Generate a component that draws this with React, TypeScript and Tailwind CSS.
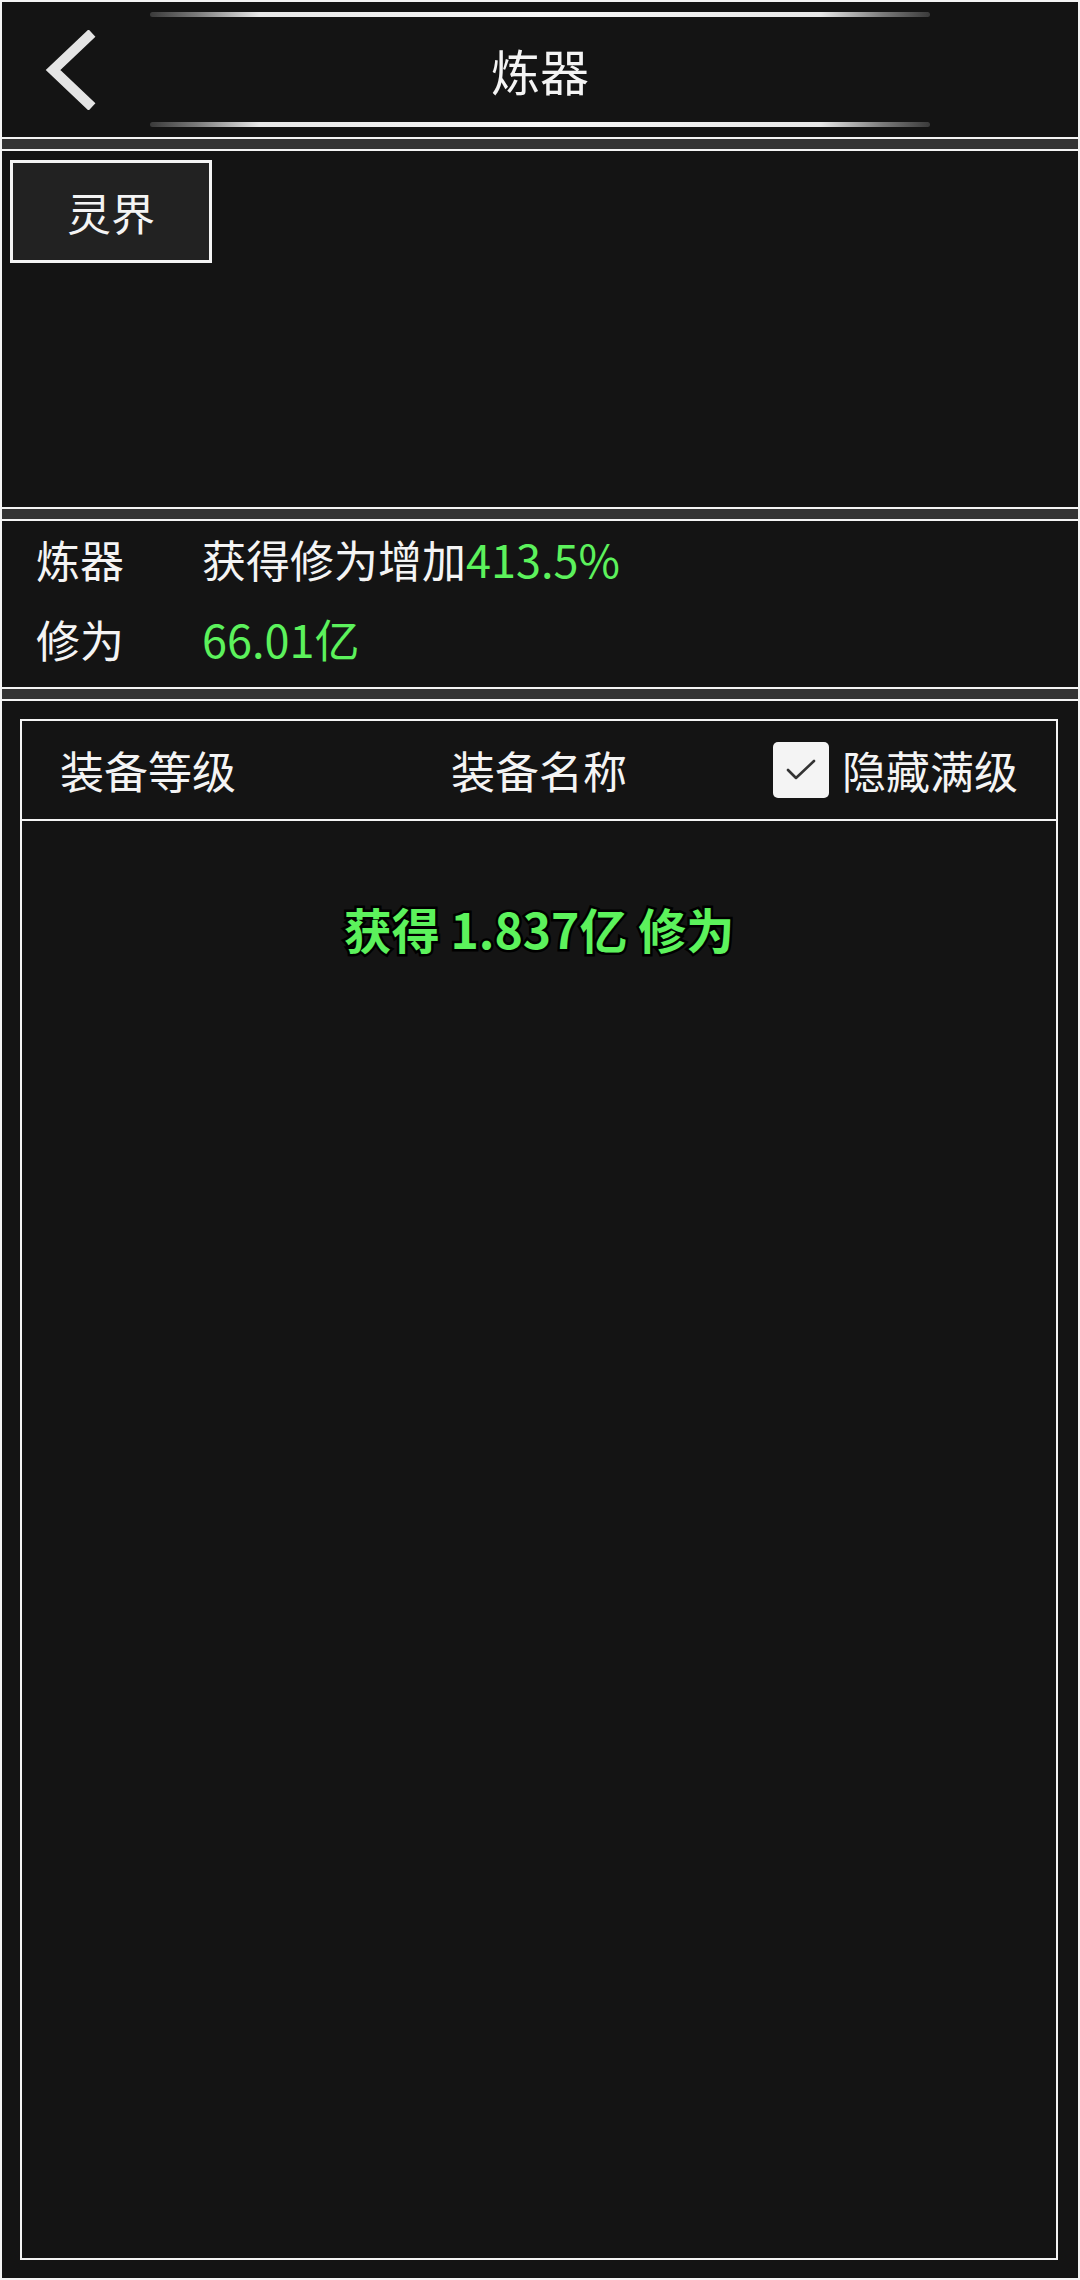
import React from "react";

function GlowLine() {
  return (
    <div className="ml-[148px] w-[780px] h-[5px] rounded-full bg-[linear-gradient(90deg,#3a3a3a_0%,#7a7a7a_6%,#e8e8e8_14%,#f8f8f8_50%,#e8e8e8_86%,#7a7a7a_94%,#3a3a3a_100%)]" />
  );
}

function Divider() {
  return <div className="h-[10px] bg-[#343434] shrink-0" />;
}

export default function App() {
  return (
    <div className="w-[1080px] h-[2280px] bg-[#f4f4f4] p-[2px] flex flex-col gap-[2px] font-['Noto_Sans_CJK_SC','Noto_Sans',sans-serif] text-[#f4f4f4]">
      {/* Header */}
      <div className="h-[135px] shrink-0 bg-[#141414] flex flex-col pt-[10px]">
        <GlowLine />
        <div className="h-[105px] grid grid-cols-[1fr_auto_1fr] items-center">
          <div className="pl-[41px] flex items-center">
            <svg width="56" height="80" viewBox="0 0 56 80">
              <polyline
                points="49,3 10,40 49,77"
                fill="none"
                stroke="#e4e4e4"
                strokeWidth="10"
                strokeLinejoin="miter"
                strokeLinecap="butt"
              />
            </svg>
          </div>
          <div className="text-[49px] leading-none">炼器</div>
          <div />
        </div>
        <GlowLine />
      </div>
      <Divider />
      {/* Realm tabs */}
      <div className="h-[356px] shrink-0 bg-[#141414] pl-[8px] pt-[9px]">
        <div className="w-[202px] h-[103px] border-[3px] border-[#f4f4f4] bg-[#222222] flex items-center justify-center text-[44px]">
          灵界
        </div>
      </div>
      <Divider />
      {/* Stats */}
      <div className="h-[166px] shrink-0 bg-[#141414] pl-[34px] pt-[8px] flex flex-col gap-[20px] text-[44px]">
        <div className="h-[60px] flex items-center">
          <div className="w-[166px]">炼器</div>
          <div>
            获得修为增加<span className="text-[#5cf25c] text-[45px]">413.5%</span>
          </div>
        </div>
        <div className="h-[60px] flex items-center">
          <div className="w-[166px]">修为</div>
          <div className="text-[#5cf25c] text-[45px]">66.01亿</div>
        </div>
      </div>
      <Divider />
      {/* Equipment list */}
      <div className="flex-1 bg-[#141414] pt-[18px] pl-[18px] pr-[20px] pb-[18px] flex">
        <div className="flex-1 border-2 border-[#f4f4f4] flex flex-col">
          <div className="h-[100px] border-b-2 border-[#f4f4f4] grid grid-cols-[1fr_auto_1fr] items-center px-[38px] text-[44px]">
            <div>装备等级</div>
            <div>装备名称</div>
            <div className="flex items-center justify-end gap-[13px]">
              <div className="w-[56px] h-[56px] rounded-[5px] bg-[#f4f4f4] flex items-center justify-center">
                <svg width="30" height="26" viewBox="0 0 30 26">
                  <polyline
                    points="2,13 10,21 28,4"
                    fill="none"
                    stroke="#333333"
                    strokeWidth="2.6"
                    strokeLinecap="round"
                    strokeLinejoin="round"
                  />
                </svg>
              </div>
              <div>隐藏满级</div>
            </div>
          </div>
          <div className="pt-[74px] flex justify-center">
            <div className="text-[48px] font-bold leading-[66px] text-[#5cf25c] [paint-order:stroke_fill] [-webkit-text-stroke:5px_#000]">
              获得 1.837亿 修为
            </div>
          </div>
        </div>
      </div>
    </div>
  );
}
